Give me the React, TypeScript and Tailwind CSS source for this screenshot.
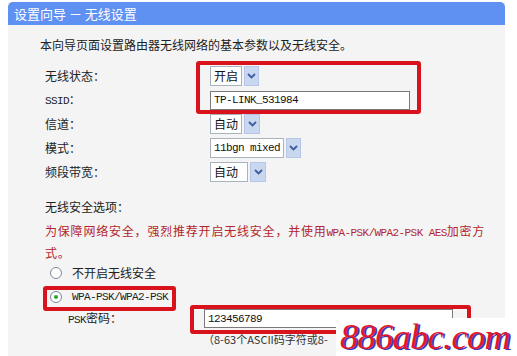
import type { ReactNode } from "react";

const cjk = "font-['Noto_Sans_CJK_SC','Noto_Sans',sans-serif]";
// SimSun-like half-width latin: ~6px advance
const mono = "font-['Liberation_Mono','Noto_Sans_CJK_SC',monospace] text-[11px] tracking-[-0.6px]";

function Arrow() {
  return (
    <span className="flex w-[16px] items-center justify-center border border-[#b6c6e6] bg-[#c9d7f0]">
      <svg width="9" height="6" viewBox="0 0 9 6">
        <path d="M1 1 L4.5 4.5 L8 1" fill="none" stroke="#3d5c9c" strokeWidth="1.8" />
      </svg>
    </span>
  );
}

function Select({ children, className }: { children: ReactNode; className: string }) {
  return (
    <div className={`flex h-[20px] items-stretch gap-[2px] ${className}`}>
      <span className="flex flex-1 items-center whitespace-nowrap border border-[#a9b3bc] bg-white px-[3px] text-[12px] leading-none text-[#111]">
        {children}
      </span>
      <Arrow />
    </div>
  );
}

function Row({ label, children }: { label: ReactNode; children: ReactNode }) {
  return (
    <div className="flex h-[20px] items-center">
      <div className="w-[165px] text-[12px] leading-[16px] text-[#222]">{label}</div>
      {children}
    </div>
  );
}

function Radio({ checked }: { checked?: boolean }) {
  return (
    <span className="flex h-[12px] w-[12px] items-center justify-center rounded-full border border-[#7a8a99] bg-white">
      {checked && <span className="h-[4px] w-[4px] rounded-full bg-[#2aa52a]" />}
    </span>
  );
}

export default function App() {
  return (
    <div className={`relative h-[356px] w-[517px] overflow-hidden bg-white ${cjk}`}>
      <div className="ml-[8px] mt-[2px] flex h-[354px] w-[497px] flex-col bg-[#f4f4f4]">
        <div className="flex h-[23px] items-center rounded-t-[5px] bg-[#5f91f2] pl-[6px] text-[13px] text-white">
          设置向导 － 无线设置
        </div>

        <div className="pl-[32px] pt-[12px] text-[12px] leading-[16px] text-[#222]">
          本向导页面设置路由器无线网络的基本参数以及无线安全。
        </div>

        <div className="flex flex-col gap-[4px] pl-[37px] pt-[13px]">
          <Row label="无线状态：">
            <Select className="w-[49px]">开启</Select>
          </Row>
          <Row label={<span className={mono}>SSID：</span>}>
            <div className={`flex h-[19px] w-[200px] items-center border border-[#7a7a7a] bg-white px-[3px] text-[#111] ${mono}`}>
              TP-LINK_531984
            </div>
          </Row>
          <Row label="信道：">
            <Select className="w-[50px]">自动</Select>
          </Row>
          <Row label="模式：">
            <Select className="w-[91px]">
              <span className={mono}>11bgn mixed</span>
            </Select>
          </Row>
          <Row label="频段带宽：">
            <Select className="w-[56px]">自动</Select>
          </Row>
        </div>

        <div className="pl-[37px] pt-[17px] text-[12px] leading-[16px] text-[#222]">无线安全选项：</div>
        <div className="pl-[37px] pt-[6px] text-[12px] leading-[19px] tracking-[0.8px] text-[#b3262c]">
          为保障网络安全，强烈推荐开启无线安全，并使用<span className={mono}>WPA-PSK/WPA2-PSK AES</span>加密方
          <br />
          式。
        </div>

        <div className="flex items-center gap-[10px] pl-[42px] pt-[3px] text-[12px] leading-[16px] text-[#222]">
          <Radio />
          <span>不开启无线安全</span>
        </div>
        <div className="flex items-center gap-[10px] pl-[42px] pt-[8px] text-[12px] leading-[16px] text-[#222]">
          <Radio checked />
          <span className={mono}>WPA-PSK/WPA2-PSK</span>
        </div>
        <div className="flex items-center pl-[60px] pt-[4px] text-[12px] leading-[16px] text-[#222]">
          <span className="w-[136px]">
            <span className={mono}>PSK</span>密码：
          </span>
          <div className={`flex h-[19px] w-[249px] items-center border border-[#7a7a7a] bg-white px-[3px] text-[#111] ${mono}`}>
            123456789
          </div>
        </div>
        <div className="pl-[195px] pt-[4px] text-[11px] leading-[14px] text-[#333]">（8-63个ASCII码字符或8-</div>
      </div>

      {/* red annotation boxes */}
      <div className="pointer-events-none absolute left-[196px] top-[61px] h-[53px] w-[225px] rounded-[3px] border-[4px] border-[#d9131b]" />
      <div className="pointer-events-none absolute left-[43px] top-[286px] h-[25px] w-[133px] rounded-[3px] border-[4px] border-[#d9131b]" />
      <div className="pointer-events-none absolute left-[190px] top-[305px] h-[29px] w-[281px] rounded-[3px] border-[4px] border-[#d9131b]" />

      {/* watermark */}
      <div className="absolute left-[336px] top-[318px] bg-white pl-[4px] pr-[2px] font-['Liberation_Serif',serif] text-[36px] italic leading-[38px] tracking-[-0.5px] text-[#e0182a] [text-shadow:2px_1px_0_#3a3ab8]">
        886abc.com
      </div>
    </div>
  );
}
